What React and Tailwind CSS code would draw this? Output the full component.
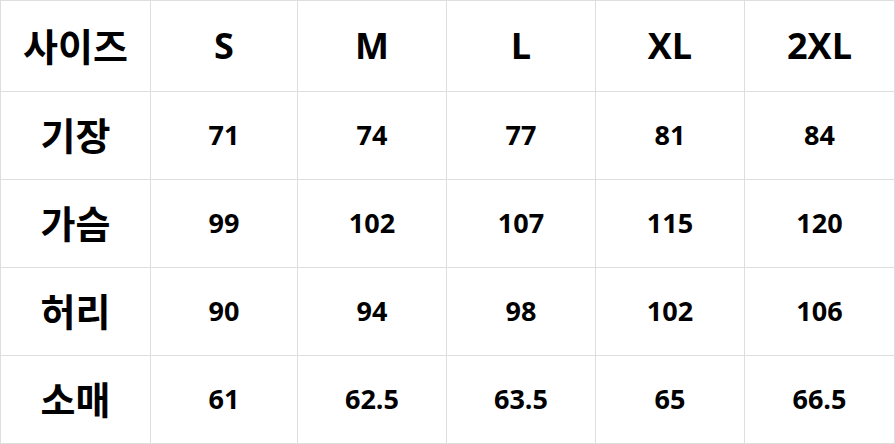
const header = ['사이즈', 'S', 'M', 'L', 'XL', '2XL'];
const rows = [
  ['기장', '71', '74', '77', '81', '84'],
  ['가슴', '99', '102', '107', '115', '120'],
  ['허리', '90', '94', '98', '102', '106'],
  ['소매', '61', '62.5', '63.5', '65', '66.5'],
];

const cols = 'grid grid-cols-[150px_147px_149px_149px_149px_150px]';

export default function App() {
  return (
    <div className="w-[895px] h-[444px] bg-white font-['Open_Sans','Noto_Sans_CJK_KR',sans-serif] text-black">
      <div className="border-t border-l border-[#dedede]">
        <div className={`${cols} h-[91px]`}>
          {header.map((h, i) => (
            <div
              key={h}
              className={`flex items-center justify-center border-r border-b border-[#dedede] font-bold ${
                i === 0 ? 'text-[38px]' : 'text-[36px]'
              }`}
            >
              {h}
            </div>
          ))}
        </div>
        {rows.map((r) => (
          <div key={r[0]} className={`${cols} h-[88px]`}>
            {r.map((c, i) => (
              <div
                key={i}
                className={`flex items-center justify-center border-r border-b border-[#dedede] font-bold ${
                  i === 0 ? 'text-[38px]' : 'text-[27px]'
                }`}
              >
                {c}
              </div>
            ))}
          </div>
        ))}
      </div>
    </div>
  );
}
